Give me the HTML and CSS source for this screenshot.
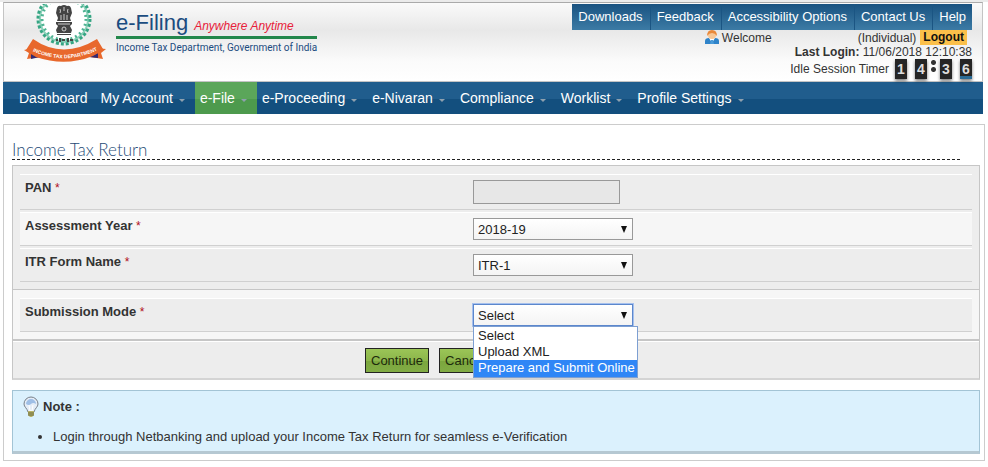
FILE: index.html
```html
<!DOCTYPE html>
<html lang="en">

<head>
    <meta charset="UTF-8">
    <meta name="viewport" content="width=device-width, initial-scale=1.0">
    <title>e-Filing - Income Tax Return</title>
    <link rel="stylesheet" href="styles.css">
</head>

<body>
    <header class="header">
        <svg class="emblem" width="86" height="60" viewBox="22 4 86 60" aria-hidden="true">
            <!-- wreath -->
            <ellipse cx="64" cy="19" rx="24" ry="23" fill="#fff" stroke="#8fd3bb" stroke-width="2" />
            <ellipse cx="64" cy="19" rx="26" ry="25" fill="none" stroke="#35a583" stroke-width="3" stroke-dasharray="3 2" />
            <ellipse cx="64" cy="19" rx="22" ry="21" fill="none" stroke="#4fb393" stroke-width="3" stroke-dasharray="2 3" />
            <!-- lion capital -->
            <g fill="#444">
                <path d="M57 8q1-3 4-2q3-2 6 0q3-1 4 2l1 5l-2 5l1 3H57l1-3l-2-5z" />
                <path d="M56 22h16v2l-2 2l2 4l-1 3H57l-1-3l2-4l-2-2z" />
                <path d="M57 34h14v1H57zM56 39h2v2h-2zM59 38h2v4h-2zM62 39h3v2h-3zM67 38h2v4h-2zM70 39h3v2h-3z" />
            </g>
            <g fill="none" stroke="#ccc">
                <path d="M60 9q1 2 0 4M64 7v4M68 9q-1 2 0 4M61 15v5M64 14v6M67 15v5M58 24h12" />
                <circle cx="64" cy="29" r="2" />
            </g>
            <!-- ribbon -->
            <path d="M33 48l-9 2l5 3l-2 6l13-2zM96 48l10 1l-5 4l2 6l-13-2z" fill="#e8682c" />
            <path d="M31 53l9 4l-9 2zM98 53l-9 4l9 1z" fill="#322a72" />
            <path d="M33 39q30 21 64 0l6 10q-4 4-10 7q-28 11-57 1q-6-3-10-7z" fill="#e8682c" />
            <path id="ribbon-curve" d="M28 49Q64 68 102 48" fill="none" />
            <text class="ribbon-text"><textPath href="#ribbon-curve" startOffset="50%">INCOME TAX DEPARTMENT</textPath></text>
        </svg>
        <div class="brand">
            <div class="brand-top">
                <span class="brand-name">e-Filing</span>
                <span class="brand-slogan">Anywhere Anytime</span>
            </div>
            <div class="brand-dept">Income Tax Department, Government of India</div>
        </div>
        <div class="header-right">
            <nav class="top-links">
                <a href="#">Downloads</a>
                <a href="#">Feedback</a>
                <a href="#">Accessibility Options</a>
                <a href="#">Contact Us</a>
                <a href="#">Help</a>
            </nav>
            <div class="user-row">
                <svg class="user-icon" width="14" height="15" viewBox="0 0 14 15" aria-hidden="true">
                    <path d="M0 14V11q0-3 4-3h6q4 0 4 3v3z" fill="#2f83c9" />
                    <path d="M4 8l3 5l3-5z" fill="#fff" />
                    <circle cx="7" cy="5" r="4" fill="#f8c795" />
                    <path d="M2 6q0-6 5-6t5 6q-2-3-5-3T2 6z" fill="#e9893a" />
                    <path d="M6 10h2l1 4H5z" fill="#4a9ad8" />
                </svg>
                <span class="welcome">Welcome</span>
                <span class="user-type">(Individual)</span>
                <a class="logout" href="#">Logout</a>
            </div>
            <div class="last-login"><b>Last Login:</b> 11/06/2018 12:10:38</div>
            <div class="timer">
                <span class="timer-label">Idle Session Timer</span>
                <span class="digit">1</span>
                <span class="digit">4</span>
                <span class="colon"></span>
                <span class="digit">3</span>
                <span class="digit last">6</span>
            </div>
        </div>
    </header>

    <nav class="menu">
        <a class="menu-item plain" href="#">Dashboard</a>
        <a class="menu-item" href="#">My Account</a>
        <a class="menu-item active" href="#">e-File</a>
        <a class="menu-item" href="#">e-Proceeding</a>
        <a class="menu-item" href="#">e-Nivaran</a>
        <a class="menu-item" href="#">Compliance</a>
        <a class="menu-item" href="#">Worklist</a>
        <a class="menu-item" href="#">Profile Settings</a>
    </nav>

    <main class="container">
        <h1 class="title">Income Tax Return</h1>

        <form class="form">
            <div class="section">
                <div class="row row-pan">
                    <label for="pan">PAN <i>*</i></label>
                    <div class="field"><input class="text" type="text" id="pan" disabled></div>
                </div>
                <div class="row light">
                    <label for="year">Assessment Year <i>*</i></label>
                    <div class="field">
                        <div class="select-box">
                            <select id="year">
                                <option>2018-19</option>
                            </select>
                        </div>
                    </div>
                </div>
                <div class="row">
                    <label for="itr">ITR Form Name <i>*</i></label>
                    <div class="field">
                        <div class="select-box">
                            <select id="itr">
                                <option>ITR-1</option>
                            </select>
                        </div>
                    </div>
                </div>
            </div>
            <div class="section light">
                <div class="row">
                    <label for="mode">Submission Mode <i>*</i></label>
                    <div class="field">
                        <div class="select-box open">
                            <select id="mode">
                                <option>Select</option>
                                <option>Upload XML</option>
                                <option>Prepare and Submit Online</option>
                            </select>
                            <ul class="options">
                                <li>Select</li>
                                <li>Upload XML</li>
                                <li class="selected">Prepare and Submit Online</li>
                            </ul>
                        </div>
                    </div>
                </div>
            </div>
            <div class="actions">
                <button class="btn" type="button">Continue</button>
                <button class="btn" type="button">Cancel</button>
            </div>
        </form>

        <div class="note">
            <div class="note-title">
                <svg width="16" height="22" viewBox="0 0 16 22" aria-hidden="true">
                    <path d="M8 1a7 7 0 0 0-7 7c0 3 3 4 4 8h6c1-4 4-5 4-8a7 7 0 0 0-7-7z" fill="#e4edf7" stroke="#777f89" />
                    <path d="M3 8a5 5 0 0 1 10 0q-3-2-5 0t-5 0z" fill="#9fbfe6" />
                    <path d="M6 9l1 6h2l1-6" fill="none" stroke="#fff" />
                    <path d="M5 15h6v4l-2 2H7l-2-2z" fill="#b9b56a" />
                    <path d="M5 17h6M5 19h6" stroke="#68693c" />
                </svg>
                <b>Note :</b>
            </div>
            <ul>
                <li>Login through Netbanking and upload your Income Tax Return for seamless e-Verification</li>
            </ul>
        </div>
    </main>
</body>

</html>
```
FILE: styles.css
```css
* {
    box-sizing: border-box;
}

body {
    margin: 0;
    padding: 0 3px 6px;
    border-top: 2px solid #ebebeb;
    background: #fff;
    color: #333;
    font-family: "Liberation Sans", Arial, sans-serif;
    font-size: 13px;
}

a {
    text-decoration: none;
}

/* header */
.header {
    display: flex;
    align-items: flex-start;
    margin-right: 2px;
    border: 1px solid #c4c4c4;
    border-top-color: #aaa;
    background: linear-gradient(#fafafa, #e8e8e8 35%, #fbfbfb 75%, #fff);
}

.emblem {
    margin: 1px 0 0 18px;
}

.ribbon-text {
    fill: #fff;
    font-size: 5px;
    font-weight: bold;
    text-anchor: middle;
}

.brand {
    margin: 7px 0 0 8px;
    color: #1b4c80;
}

.brand-top {
    display: flex;
    align-items: baseline;
    gap: 6px;
    padding-bottom: 1px;
    border-bottom: 3px solid #23874b;
}

.brand-name {
    font-size: 22px;
    line-height: 25px;
}

.brand-slogan {
    color: #e8203a;
    font-size: 12px;
    font-style: italic;
}

.brand-dept {
    font-family: Roboto, "Liberation Sans", sans-serif;
    font-size: 10px;
    line-height: 18px;
}

.header-right {
    display: flex;
    flex-direction: column;
    align-items: flex-end;
    margin: 1px 10px 2px auto;
    font-size: 12px;
}

.top-links {
    display: flex;
    background: linear-gradient(#195280, #3c7ba5);
}

.top-links a {
    padding: 0 7px 0 6px;
    border-right: 1px solid #1b5583;
    color: #fff;
    font-size: 13px;
    line-height: 26px;
}

.top-links a:last-child {
    padding-right: 6px;
    border-right: 0;
}

.user-row {
    display: flex;
    align-items: center;
    padding-right: 5px;
    height: 15px;
}

.user-icon {
    margin-right: 3px;
}

.user-type {
    margin: 0 4px 0 86px;
}

.logout {
    padding: 0 3px;
    background: #fbc04a;
    color: #111;
    font-weight: bold;
    line-height: 15px;
}

.last-login {
    line-height: 14px;
}

.timer {
    display: flex;
    align-items: center;
    gap: 8px;
    height: 20px;
}

.digit {
    width: 12px;
    background: #252525;
    box-shadow: 0 2px 3px rgba(0, 0, 0, .5);
    color: #ddd;
    font-size: 14px;
    font-weight: bold;
    line-height: 20px;
    text-align: center;
}

.timer-label {
    margin-right: -2px;
}

.digit.last {
    background: linear-gradient(#252525 85%, #2a6b96 85%);
}

.colon {
    align-self: flex-start;
    width: 5px;
    height: 14px;
    margin: 0 -4px;
    background: radial-gradient(circle, #333 2px, transparent 3px) 0 0 / 5px 7px;
}

/* main menu */
.menu {
    display: flex;
    margin-right: 2px;
    padding-left: 10px;
    background: linear-gradient(#205d8d 53%, #134f7e 53%);
}

.menu-item {
    display: flex;
    align-items: center;
    padding: 0 10px 0 5px;
    color: #fff;
    font-size: 14px;
    line-height: 32px;
}

.menu-item::after {
    content: "";
    margin: 4px 0 0 6px;
    border: 3px solid transparent;
    border-top-color: #8ea0ae;
    border-bottom: 0;
}

.menu-item.plain::after {
    display: none;
}

.menu-item.plain {
    padding: 0 8px 0 6px;
}

.menu-item.active {
    background: linear-gradient(#5ba65a 53%, #4d9a4d 53%);
}

/* content */
.container {
    margin-top: 10px;
    padding: 16px 4px 6px 8px;
    border: 1px solid #ccc;
}

.title {
    margin: 0 20px 5px 0;
    border-bottom: 1px dashed #222;
    color: #1e4a76;
    font-family: Lato, "Liberation Sans", sans-serif;
    font-size: 17px;
    font-weight: 300;
    line-height: 18px;
}

.form {
    border: 1px solid #c6c6c6;
    border-bottom: 2px solid #d4d4d4;
    background: #ededed;
}

.section {
    padding: 8px 7px 7px;
    border-bottom: 1px solid #c6c6c6;
}

.section.light {
    border-bottom-width: 2px;
    background: #f6f6f6;
}

.row {
    display: flex;
    align-items: flex-start;
    min-height: 34px;
    margin-bottom: 2px;
    padding-left: 5px;
    border-top: 1px solid #fff;
    border-bottom: 1px solid #d0d0d0;
    background: #ededed;
}

.row:last-child {
    margin-bottom: 0;
}

.row.light {
    background: #f6f6f6;
}

.row label {
    width: 448px;
    padding-top: 5px;
    font-weight: bold;
    line-height: 16px;
}

.row label i {
    color: #b01020;
    font-size: 12px;
    font-style: normal;
    font-weight: normal;
}

.field {
    padding-top: 5px;
}

.text {
    display: block;
    width: 147px;
    height: 24px;
    border: 1px solid #999;
    background: #e7e7e7;
}

.row-pan {
    min-height: 36px;
}

.select-box {
    position: relative;
    width: 160px;
}

.select-box::after {
    content: "";
    position: absolute;
    top: 8px;
    right: 6px;
    border: 3px solid transparent;
    border-top: 7px solid #111;
    border-bottom: 0;
    pointer-events: none;
}

.select-box select {
    display: block;
    width: 100%;
    height: 22px;
    padding: 0 4px;
    border: 1px solid #999;
    border-radius: 0;
    background: linear-gradient(#fff, #f4f4f4);
    color: #222;
    font-family: inherit;
    font-size: 13px;
    appearance: none;
}

.select-box.open select {
    border-color: #5c87cc;
    outline: 1px solid #a5c0ee;
}

.options {
    position: absolute;
    z-index: 1;
    top: 100%;
    left: 0;
    margin: 0;
    padding: 1px 0 0;
    border: 1px solid #7d9fd2;
    background: #fff;
    color: #222;
    line-height: 16px;
    list-style: none;
    white-space: nowrap;
}

.options li {
    padding: 0 2px 0 4px;
}

.options .selected {
    padding-bottom: 1px;
    background: #2f86f6;
    color: #fff;
}

.actions {
    display: flex;
    gap: 10px;
    padding: 6px 0 5px 352px;
    border-top: 1px solid #fff;
}

.btn {
    height: 25px;
    padding: 0 5px;
    border: 1px solid #222;
    background: linear-gradient(#9bc557, #8cb64b 50%, #7aa63d 50%, #82ac45);
    color: #1d2a0c;
    font-family: inherit;
    font-size: 13px;
}

/* note */
.note {
    margin-top: 10px;
    padding: 5px 10px 6px;
    border: 1px solid #a3c4d5;
    border-bottom: 3px solid #b5c8d2;
    background: #dbf1fd;
}

.note-title {
    display: flex;
    gap: 4px;
}

.note-title b {
    line-height: 22px;
}

.note ul {
    margin: 11px 0 0;
    padding-left: 30px;
    line-height: 16px;
}
```
